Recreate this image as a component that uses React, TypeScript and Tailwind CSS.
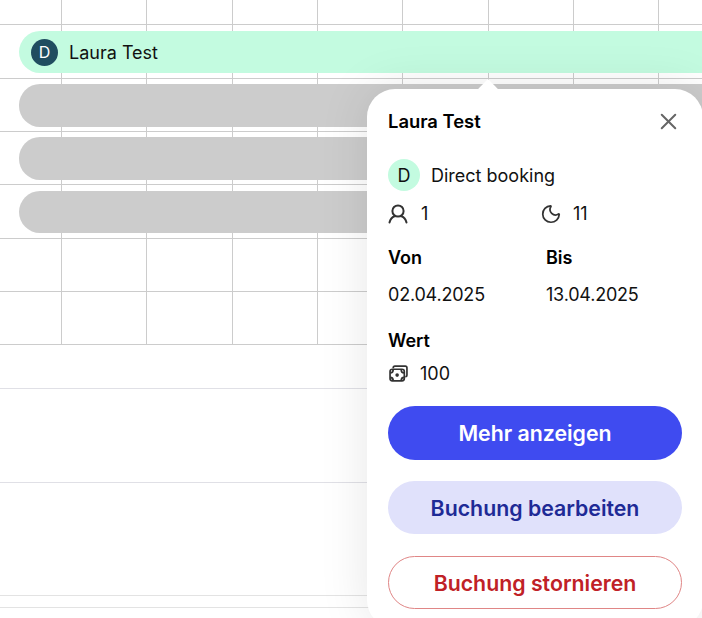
import { Moon, X } from "lucide-react";

const columns = [0, 1, 2, 3, 4, 5, 6, 7, 8];

const rows = [
  { id: "r1", bar: "bg-[#c3fbe0]", name: "Laura Test" },
  { id: "r2", bar: "bg-[#cccccc]", name: "" },
  { id: "r3", bar: "bg-[#cccccc]", name: "" },
  { id: "r4", bar: "bg-[#cccccc]", name: "" },
  { id: "r5", bar: "", name: "" },
  { id: "r6", bar: "", name: "" },
];

function Cells() {
  return (
    <div className="grid h-full grid-cols-[62px_repeat(7,85.33px)_85.33px_1fr]">
      {columns.map((c) => (
        <div key={c} className="border-r border-[#cccccc]" />
      ))}
    </div>
  );
}

function Guest() {
  return (
    <svg viewBox="0 0 20 20" className="h-5 w-5 text-[#333333]" fill="none" stroke="currentColor" strokeWidth="2" strokeLinecap="round">
      <circle cx="10" cy="7" r="5.6" />
      <path d="M1.5 18.5c.8-3.2 2.8-5.5 5-6.3M18.5 18.5c-.8-3.2-2.8-5.5-5-6.3" />
    </svg>
  );
}

function Money() {
  return (
    <svg viewBox="0 0 18 16" className="ml-px h-[17px] w-[19px] text-[#333333]" fill="none" stroke="currentColor" strokeWidth="1.6">
      <path d="M4 3V2.6C4 1.7 4.7 1 5.6 1h9.8c.9 0 1.6.7 1.6 1.6v6.8c0 .9-.7 1.6-1.6 1.6" />
      <rect x="1" y="4" width="13.5" height="11" rx="2.2" />
      <circle cx="7.7" cy="9.5" r="1.7" fill="currentColor" stroke="none" />
      <path d="M1.2 7.4c1.5 0 2.8-1.3 2.8-3.2M14.3 7.4c-1.5 0-2.8-1.3-2.8-3.2M1.2 11.6c1.5 0 2.8 1.3 2.8 3.2M14.3 11.6c-1.5 0-2.8 1.3-2.8 3.2" />
    </svg>
  );
}

function Popup() {
  return (
    <div className="absolute left-[367px] top-[89px] h-[539px] w-[336px] rounded-[28px] bg-white px-[21px] pt-[20px] text-[18px] text-[#111111] shadow-[0_0_50px_rgba(0,0,0,0.1)]">
      {/* arrow */}
      <div className="absolute left-[114px] top-[-7px] h-[14px] w-[14px] rotate-45 bg-white" />

      <div className="relative flex h-[24px] items-center justify-between">
        <span className="pt-[2px] text-[18.4px] font-semibold text-black">Laura Test</span>
        <X className="h-[27px] w-[27px] text-[#666666]" strokeWidth={1.8} />
      </div>

      <div className="mt-[26px] flex items-center gap-[11px]">
        <div className="flex h-8 w-8 items-center justify-center rounded-full bg-[#c3fbe0]">D</div>
        <span>Direct booking</span>
      </div>

      <div className="mt-[9px] grid h-[24px] grid-cols-[158px_1fr] items-center">
        <div className="flex items-center gap-[13px]">
          <Guest />
          <span>1</span>
        </div>
        <div className="flex items-center gap-[11px]">
          <Moon className="-ml-[6px] h-[22px] w-[22px] text-[#333333]" strokeWidth={1.9} />
          <span>11</span>
        </div>
      </div>

      <div className="mt-[21px] grid grid-cols-[158px_1fr]">
        <div>
          <div className="h-[25px] leading-[25px] font-semibold text-black">Von</div>
          <div className="mt-[12px] h-[25px] leading-[25px] tracking-[-0.2px]">02.04.2025</div>
        </div>
        <div>
          <div className="h-[25px] leading-[25px] font-semibold text-black">Bis</div>
          <div className="mt-[12px] h-[25px] leading-[25px] tracking-[-0.2px]">13.04.2025</div>
        </div>
      </div>

      <div className="mt-[21px] h-[25px] leading-[25px] font-semibold text-black">Wert</div>
      <div className="mt-[8px] flex h-[24px] items-center gap-[12px]">
        <Money />
        <span>100</span>
      </div>

      <div className="mt-[21px] flex flex-col gap-[21px] text-[21.3px] font-semibold">
        <button className="h-[54px] rounded-full bg-[#3f4bf0] pt-[2px] text-white">Mehr anzeigen</button>
        <button className="h-[53px] rounded-full bg-[#e0e1fb] pt-[2px] text-[#1e2a96]">Buchung bearbeiten</button>
        <button className="mt-[1px] h-[53px] rounded-full border border-[#e08686] bg-white pt-[2px] text-[#c02126]">Buchung stornieren</button>
      </div>
    </div>
  );
}

export default function App() {
  return (
    <div className="relative h-[618px] w-[702px] overflow-hidden bg-white font-['Inter',sans-serif]">
      <div className="h-[25.3px] border-b border-[#cccccc]">
        <Cells />
      </div>

      {rows.map((row) => (
        <div key={row.id} className="relative h-[53.33px] border-b border-[#cccccc]">
          <Cells />
          {row.bar && (
            <div className={`absolute left-[19px] right-0 top-[5.5px] flex h-[42.67px] items-center rounded-l-[21px] pl-[12px] ${row.bar}`}>
              {row.name && (
                <>
                  <div className="flex h-[27px] w-[27px] items-center justify-center rounded-full bg-[#204d60] text-[16px] text-white">D</div>
                  <span className="ml-[11px] text-[18px] text-[#111111]">{row.name}</span>
                </>
              )}
            </div>
          )}
        </div>
      ))}

      {/* empty rows below the grid */}
      <div className="h-[44px] border-b border-[#e0e0e6]" />
      <div className="h-[94px] border-b border-[#e0e0e6]" />
      <div className="h-[113px] border-b border-[#e3e3e3]" />
      <div className="h-[12px] border-b border-[#e3e3e3]" />

      <Popup />
    </div>
  );
}
